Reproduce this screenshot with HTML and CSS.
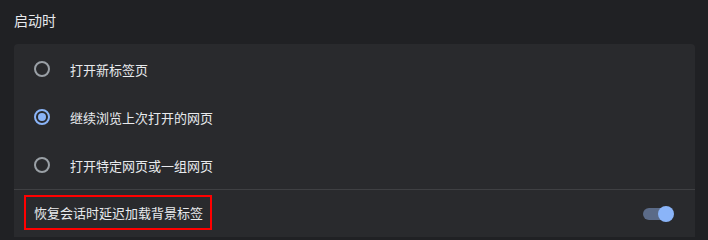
FILE: index.html
```html
<!DOCTYPE html>
<html lang="zh-CN">
<head>
<meta charset="utf-8">
<link rel="stylesheet" href="styles.css">
</head>
<body>
<div class="title">启动时</div>
<div class="card">
  <div class="radio-row">
    <span class="radio"></span>
    <span class="label">打开新标签页</span>
  </div>
  <div class="radio-row">
    <span class="radio checked"></span>
    <span class="label">继续浏览上次打开的网页</span>
  </div>
  <div class="radio-row">
    <span class="radio"></span>
    <span class="label">打开特定网页或一组网页</span>
  </div>
  <div class="toggle-row">
    <span class="highlight">恢复会话时延迟加载背景标签</span>
    <span class="toggle"><span class="track"></span><span class="knob"></span></span>
  </div>
</div>
</body>
</html>
```
FILE: styles.css
```css
html, body {
  margin: 0;
  padding: 0;
  background: #202124;
  color: #e8eaed;
  font-family: "Noto Sans CJK SC", "Noto Sans", sans-serif;
  overflow: hidden;
  height: 237px;
}
.title {
  font-size: 14px;
  line-height: 20px;
  padding: 10px 0 0 14px;
  height: 34px;
}
.card {
  margin: 0 13px 0 14px;
  background: #292a2d;
  border-radius: 4px 4px 0 0;
  padding-top: 1px;
  height: 192px;
}
.radio-row {
  height: 48px;
  display: flex;
  align-items: center;
  padding-left: 20px;
  gap: 20px;
  font-size: 13px;
}
.radio {
  width: 16px;
  height: 16px;
  box-sizing: border-box;
  border: 2px solid #9aa0a6;
  border-radius: 50%;
  display: flex;
  align-items: center;
  justify-content: center;
}
.radio.checked {
  border-color: #8ab4f8;
}
.radio.checked::after {
  content: "";
  width: 8px;
  height: 8px;
  border-radius: 50%;
  background: #8ab4f8;
}
.toggle-row {
  border-top: 1px solid #3f4043;
  display: flex;
  align-items: center;
  justify-content: space-between;
  padding: 5px 21px 0 10px;
  font-size: 13px;
}
.highlight {
  border: 2px solid #ff0000;
  padding: 0 7px 0 8px;
  height: 31px;
  line-height: 31px;
  white-space: nowrap;
}
.toggle {
  position: relative;
  width: 31px;
  height: 16px;
  margin-top: 3px;
}
.track {
  position: absolute;
  left: 0;
  top: 2px;
  width: 28px;
  height: 12px;
  border-radius: 6px;
  background: #5b6b88;
}
.knob {
  position: absolute;
  right: 0;
  top: 0;
  width: 16px;
  height: 16px;
  border-radius: 50%;
  background: #8ab4f8;
}
```
